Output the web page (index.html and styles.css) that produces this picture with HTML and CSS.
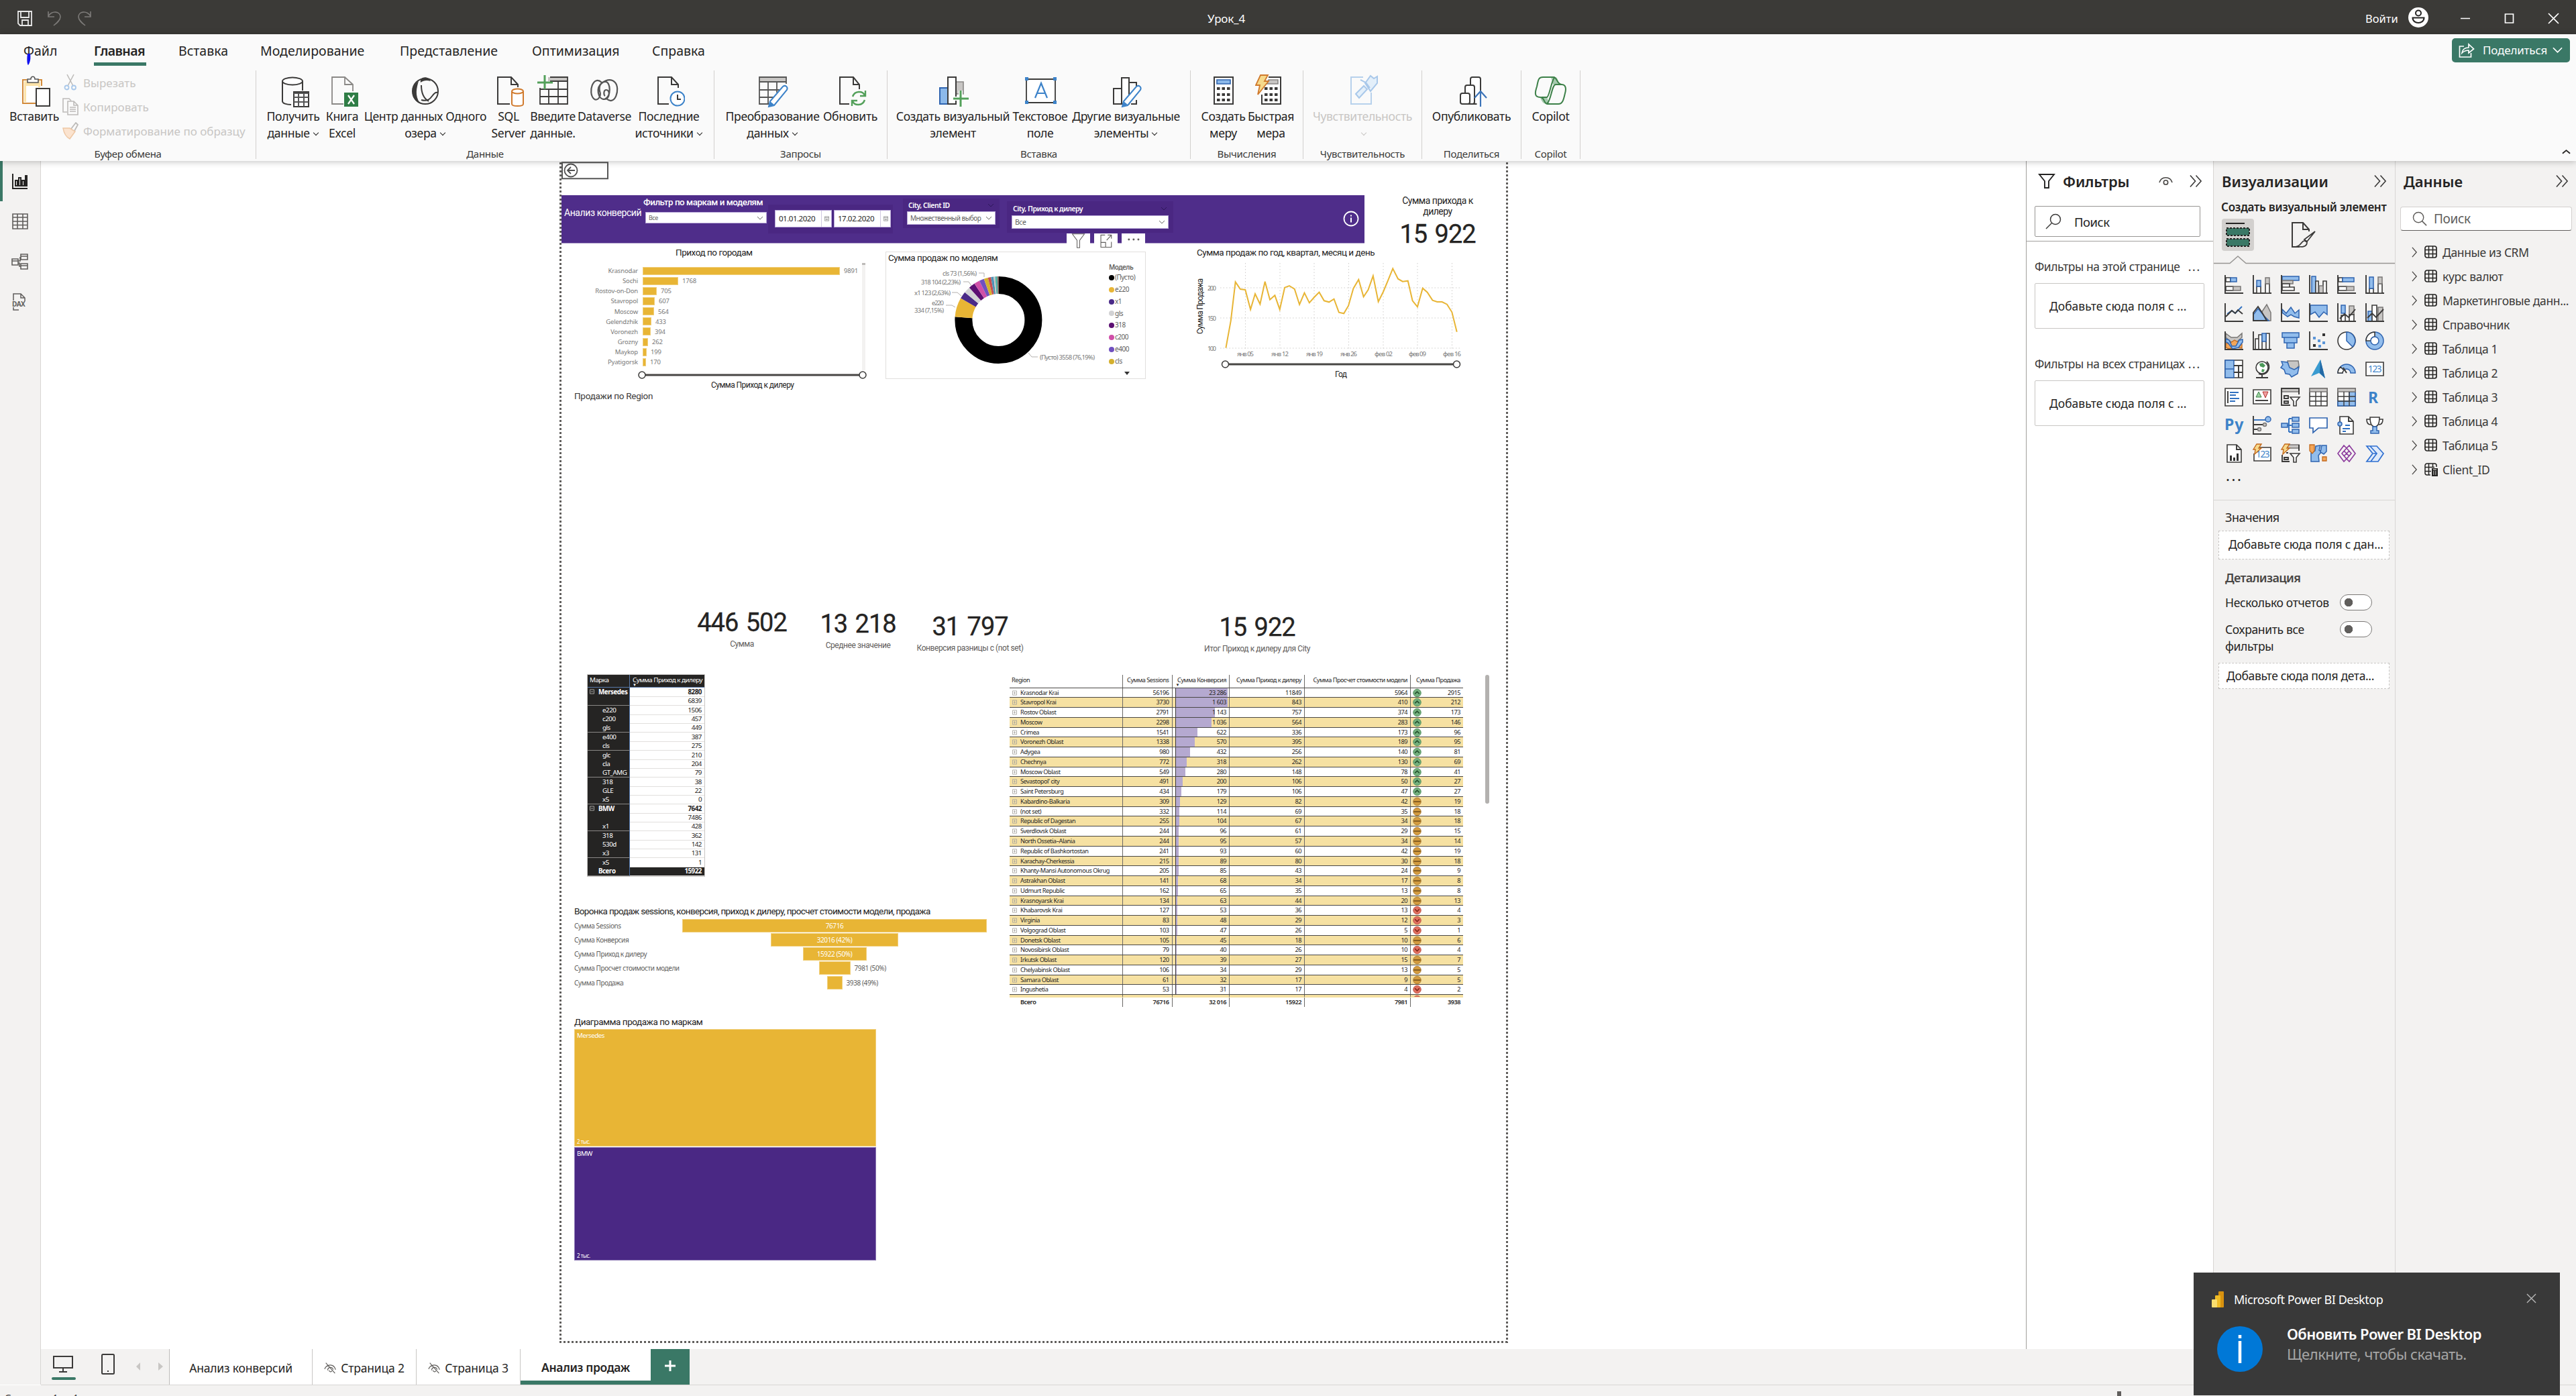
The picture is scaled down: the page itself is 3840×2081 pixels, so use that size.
FILE: index.html
```html
<!DOCTYPE html>
<html lang="ru">
<head>
<meta charset="utf-8">
<title>Урок_4</title>
<link rel="stylesheet" href="styles.css">
</head>
<body>
<svg class="defs" width="0" height="0">
  <symbol id="plus" viewBox="0 0 8 8"><path d="M.5 .5h7v7h-7zM2 4h4M4 2v4" fill="none" stroke="#a6a39f"/></symbol>
  <symbol id="minus" viewBox="0 0 8 8"><path d="M.5 .5h7v7h-7zM2 4h4" fill="none" stroke="#b8b6b4"/></symbol>
  <symbol id="up" viewBox="0 0 14 14"><circle cx="7" cy="7" r="6.2" fill="#73b07d" stroke="#4b8a58"/><path d="M3.5 8.5 7 5l3.5 3.5" fill="none" stroke="#24502e" stroke-width="1.6"/></symbol>
  <symbol id="mid" viewBox="0 0 14 14"><circle cx="7" cy="7" r="6.2" fill="#d39b3f" stroke="#a5752a"/><path d="M1.5 7h11" stroke="#6b4a17" stroke-width="1.6"/></symbol>
  <symbol id="down" viewBox="0 0 14 14"><circle cx="7" cy="7" r="6.2" fill="#e0705f" stroke="#b94a3c"/><path d="M3.5 5.2 7 8.8l3.5-3.6" fill="none" stroke="#7a1f16" stroke-width="1.6"/></symbol>
  <symbol id="chev" viewBox="0 0 10 8"><path d="M1 2l4 4 4-4" fill="none" stroke="currentColor"/></symbol>
  <symbol id="dbl" viewBox="0 0 20 20"><path d="M1 1l8 9-8 9M10 1l8 9-8 9" fill="none" stroke="#3b3a39" stroke-width="1.7"/></symbol>
  <symbol id="cal" viewBox="0 0 10 12"><path d="M.5 1.5h9v9h-9zM.5 4h9M3 6v3M5 6v3M7 6v3" fill="none" stroke="#777"/></symbol>
  <symbol id="tbl" viewBox="0 0 20 20"><rect x="1" y="1" width="17" height="17" rx="3" fill="none" stroke="#252423" stroke-width="1.7"/><path d="M1 6.5h17M1 12.5h17M6.5 1v17M12.5 1v17" stroke="#252423" stroke-width="1.5"/></symbol>
  <symbol id="gt" viewBox="0 0 10 18"><path d="M1 1l7 8-7 8" fill="none" stroke="#484644" stroke-width="1.4"/></symbol>
  <symbol id="hid" viewBox="0 0 22 22"><path d="M1 13C4 5 16 3 19 14M6 15c0-5 8-7 9-1M3 3l15 17M8 15c1 3 4 3 5 1" fill="none" stroke="#605e5c" stroke-width="1.3"/></symbol>
</svg>

<header class="titlebar">
  <svg class="quick" viewBox="0 0 140 30">
    <path d="M27 5h20v21H30l-3-3zM31 5v9h12V5M33 26v-8h9v8" fill="none" stroke="#e8e8e8" stroke-width="1.8"/>
    <path d="M72 5v8h9M72 12C78 3 90 5 90 13c0 5-5 9-10 13" fill="none" stroke="#7d7b79" stroke-width="1.6"/>
    <path d="M135 5v8h-9M135 12C129 3 117 5 117 13c0 5 5 9 10 13" fill="none" stroke="#7d7b79" stroke-width="1.6"/>
  </svg>
  <span class="doc">Урок_4</span>
  <div class="winctl">
    <span class="signin">Войти</span>
    <svg class="avatar" viewBox="0 0 30 30"><circle cx="15" cy="15" r="15" fill="#fff"/><circle cx="15" cy="8.5" r="4" fill="none" stroke="#252423" stroke-width="2"/><path d="M6.500 15.500h17c0 10-17 10-17 0z" fill="none" stroke="#252423" stroke-width="2"/></svg>
    <svg class="wc" viewBox="0 0 160 30"><path d="M2 15.500h14M68.500 9h12v13h-12zM133 8l15 15M148 8l-15 15" fill="none" stroke="#fff" stroke-width="1.7"/></svg>
  </div>
</header>

<section class="ribbon">
  <nav class="tabs">
    <span class="w1">Файл</span><span class="w2 on">Главная</span><span class="w3">Вставка</span><span class="w4">Моделирование</span><span class="w5">Представление</span><span class="w6">Оптимизация</span><span class="w7">Справка</span>
    <svg class="pen" viewBox="0 0 8 18"><path d="M2 0h4c1 7 0 13-3 17C1 16 1 6 2 0z" fill="#1010f0"/></svg>
    <button class="share"><svg viewBox="0 0 24 24"><path d="M8 6H1.500v16h17v-6M5 16c1-7 6-8 10-8V3l7.500 7L15 16v-4c-4 0-7 1-10 4z" fill="none" stroke="#fff" stroke-width="1.7"/></svg><span>Поделиться</span><svg class="sc" viewBox="0 0 16 10"><path d="M1 1l7 7 7-7" fill="none" stroke="#fff" stroke-width="1.8"/></svg></button>
  </nav>
  <div class="groups">
    <div class="grp g1">
      <div class="btns">
        <div class="btn b1"><svg viewBox="0 0 48 50"><path d="M13 8H7v35h20M29 8h6v9" fill="none" stroke="#d28a3a" stroke-width="2"/><path d="M9 10h24v9h-8v22H9z" fill="#fce3a9"/><path d="M12 17h18v24H12z" fill="#fff"/><path d="M14 12V7h5c0-5 6-5 6 0h5v5z" fill="#fff" stroke="#555" stroke-width="1.600"/><path d="M27 21h20v26H27z" fill="#fff" stroke="#3b3a39" stroke-width="2"/></svg><p>Вставить</p></div>
        <div class="minis">
          <p><svg viewBox="0 0 26 26"><path d="M8 1l9 17M18 1L9 18" fill="none" stroke="#bdbbb9" stroke-width="1.600"/><circle cx="7.500" cy="20.500" r="3" fill="none" stroke="#a9c8ea" stroke-width="1.800"/><circle cx="18" cy="20.500" r="3" fill="none" stroke="#a9c8ea" stroke-width="1.800"/></svg>Вырезать</p>
          <p><svg viewBox="0 0 26 26"><path d="M8 21H2V1h9l3 3M9 5h9l6 6v14H9zM18 5v6h6M12 14h9M12 17h9M12 20h9" fill="none" stroke="#bdbbb9" stroke-width="1.600"/></svg>Копировать</p>
          <p><svg viewBox="0 0 26 26"><path d="M14 10L21 1l3 3-5 9" fill="none" stroke="#bdbbb9" stroke-width="1.800"/><path d="M2 9l10 0 8 5-8 11C6 22 3 15 2 9z" fill="#fbe3cf" stroke="#eec7a4" stroke-width="1.500"/></svg>Форматирование по образцу</p>
        </div>
      </div><em>Буфер обмена</em>
    </div>
    <div class="grp g2">
      <div class="btns">
        <div class="btn b2"><svg viewBox="0 0 48 50"><path d="M8 10v30c0 3 6 5 13 5M38 10v14" fill="none" stroke="#3b3a39" stroke-width="2"/><ellipse cx="23" cy="10" rx="15" ry="5.500" fill="#fff" stroke="#3b3a39" stroke-width="2"/><path d="M25 26h22v22H25z" fill="#fff" stroke="#3b3a39" stroke-width="2"/><path d="M25 28h22M25 34h22M25 41h22M32 28v20M40 28v20" stroke="#555" stroke-width="2"/></svg><p>Получить<br>данные<i></i></p></div>
        <div class="btn b3"><svg viewBox="0 0 48 50"><path d="M26 44H9V4h19l12 11v10M28 4v11h12" fill="none" stroke="#8a8886" stroke-width="1.800"/><path d="M27 27h21v21H27z" fill="#2f7d46"/><path d="M33 31l9 13M42 31l-9 13" stroke="#fff" stroke-width="2.200"/></svg><p>Книга<br>Excel</p></div>
        <div class="btn b4"><svg viewBox="0 0 48 50"><circle cx="24" cy="25" r="19" fill="none" stroke="#3b3a39" stroke-width="2"/><path d="M17 12C15 3 28 1 32 10c-6-2-11-1-15 2zM14 10C1 18 2 38 16 43c-8-12-5-23-2-33z" fill="#3b3a39"/><path d="M18 16c0 12 4 20 11 24M43 27c-10-2-8 16-25 11" fill="none" stroke="#3b3a39" stroke-width="2"/></svg><p>Центр данных Одного<br>озера<i></i></p></div>
        <div class="btn b5"><svg viewBox="0 0 48 50"><path d="M26 44H8V4h20l10 11v4M28 4v11h10" fill="none" stroke="#3b3a39" stroke-width="2"/><path d="M29 25v19c0 4 17 4 17 0V25" fill="#fff" stroke="#d07a2d" stroke-width="2"/><ellipse cx="37.500" cy="25" rx="8.500" ry="3.500" fill="#fff" stroke="#d07a2d" stroke-width="2"/></svg><p>SQL<br>Server</p></div>
        <div class="btn b6"><svg viewBox="0 0 48 50"><path d="M17 4h29v6H17z" fill="#c8c6c4"/><path d="M20 4h26v40H5V20M20 10h26M5 22h41M5 33h41M18 22v22M32 10v34" fill="none" stroke="#3b3a39" stroke-width="1.800"/><path d="M12 1v21M1 12h23" stroke="#53a05a" stroke-width="3"/></svg><p>Введите<br>данные.</p></div>
        <div class="btn b7"><svg viewBox="0 0 48 50"><path d="M20 12C7 0-1 27 8 36c5 5 12-3 9-11-2-9 3-15 9-14 7 0 9 22-2 26M27 36c13 12 21-15 13-24-5-5-12-5-20 1-9 7-6 24 4 24 8 0 9-14 3-14-5 0-4 8-2 9" fill="none" stroke="#555" stroke-width="2.200"/></svg><p>Dataverse</p></div>
        <div class="btn b8"><svg viewBox="0 0 48 50"><path d="M24 44H8V4h20l10 11v5M28 4v11h10" fill="none" stroke="#3b3a39" stroke-width="2"/><circle cx="37" cy="36" r="10.500" fill="#fff" stroke="#3d83c9" stroke-width="2"/><path d="M37 30v7h5" fill="none" stroke="#3b3a39" stroke-width="2"/></svg><p>Последние<br>источники<i></i></p></div>
      </div><em>Данные</em>
    </div>
    <div class="grp g3">
      <div class="btns">
        <div class="btn b9"><svg viewBox="0 0 48 50"><path d="M4 5h40v5H4z" fill="#c8c6c4"/><path d="M20 44H4V4h40v10M4 11h40M4 23h30M4 34h22M17 11v33M30 11v16" fill="none" stroke="#555" stroke-width="1.800"/><path d="M20 40l19-22c4-3 8 1 6 5L26 46l-8 2z" fill="#fff" stroke="#3d83c9" stroke-width="2"/><path d="M20 40l6 5-8 3z" fill="#3d83c9"/></svg><p>Преобразование<br>данных<i></i></p></div>
        <div class="btn b10"><svg viewBox="0 0 48 50"><path d="M22 44H8V4h20l9 11v7M28 4v11h9" fill="none" stroke="#3b3a39" stroke-width="2"/><path d="M27 33c3-9 15-9 18-2M46 24v8h-8M45 38c-3 9-15 9-18 2M26 47v-8h8" fill="none" stroke="#53a05a" stroke-width="2.400"/></svg><p>Обновить</p></div>
      </div><em>Запросы</em>
    </div>
    <div class="grp g4">
      <div class="btns">
        <div class="btn b11"><svg viewBox="0 0 48 50"><path d="M4 20h12v24H4z" fill="#8cb9ea" stroke="#2f64b0" stroke-width="2"/><path d="M28 11h11v18h-11z" fill="#c8c6c4" stroke="#8a8886" stroke-width="1.600"/><path d="M16 4h12v40H16z" fill="#fff" stroke="#3b3a39" stroke-width="2"/><path d="M35 24v24M24 36h23" stroke="#fff" stroke-width="6"/><path d="M35 24v24M24 36h23" stroke="#53a05a" stroke-width="3"/></svg><p>Создать визуальный<br>элемент</p></div>
        <div class="btn b12"><svg viewBox="0 0 48 50"><path d="M3 7h43v35H3z" fill="#fff" stroke="#3b3a39" stroke-width="1.800"/><path d="M1 4h5v5H1zM43 4h5v5h-5zM1 39h5v5H1zM43 39h5v5h-5z" fill="#3d83c9"/><path d="M16 35l9-22 9 22M19 28h12" fill="none" stroke="#3d83c9" stroke-width="2.200"/></svg><p>Текстовое<br>поле</p></div>
        <div class="btn b13"><svg viewBox="0 0 48 50"><path d="M5 21h12v23H5zM28 12h11v7M39 38v6h-8" fill="none" stroke="#3b3a39" stroke-width="2"/><path d="M17 5h11v39H17z" fill="#fff" stroke="#3b3a39" stroke-width="2"/><path d="M20 40l19-22c4-3 8 1 6 5L26 46l-8 2z" fill="#fff" stroke="#3d83c9" stroke-width="2"/><path d="M20 40l6 5-8 3z" fill="#3d83c9"/></svg><p>Другие визуальные<br>элементы<i></i></p></div>
      </div><em>Вставка</em>
    </div>
    <div class="grp g5">
      <div class="btns">
        <div class="btn b14"><svg viewBox="0 0 48 50"><path d="M10 4h28v40H10z" fill="#fff" stroke="#3b3a39" stroke-width="2"/><path d="M14 8h20v6H14z" fill="#8cb9ea" stroke="#2f64b0" stroke-width="1.600"/><path d="M14 21h20M14 30h20M14 38h20" stroke="#3b3a39" stroke-width="4" stroke-dasharray="4.500 3"/></svg><p>Создать<br>меру</p></div>
        <div class="btn b15"><svg viewBox="0 0 48 50"><path d="M20 4h18v40H10V30" fill="#fff" stroke="#3b3a39" stroke-width="2"/><path d="M20 8h14v6H18z" fill="#c8c6c4" stroke="#8a8886" stroke-width="1.600"/><path d="M14 21h20M14 30h20M14 38h20" stroke="#3b3a39" stroke-width="4" stroke-dasharray="4.500 3"/><path d="M8 1h11l-5 9h6L4 30l3-14H1z" fill="#f6d98b" stroke="#d07a2d" stroke-width="1.800"/></svg><p>Быстрая<br>мера</p></div>
      </div><em>Вычисления</em>
    </div>
    <div class="grp g6">
      <div class="btns"><div class="btn off"><svg viewBox="0 0 48 50"><path d="M25 4H7v40h30V27" fill="none" stroke="#b7d1ec" stroke-width="2"/><path d="M14 29l12-12 5 5-12 13zM21 8l8 4 6 8M28 13l8-11 5 4 5-3v10L36 25z" fill="#e3effa" stroke="#a9c8ea" stroke-width="2"/></svg><p>Чувствительность<br><i></i></p></div></div><em>Чувствительность</em>
    </div>
    <div class="grp g7">
      <div class="btns"><div class="btn"><svg viewBox="0 0 48 50"><rect x="22" y="4" width="15" height="40" rx="3" fill="#fff" stroke="#3b3a39" stroke-width="2"/><rect x="14" y="16" width="14" height="28" rx="3" fill="#fff" stroke="#3b3a39" stroke-width="2"/><rect x="7" y="28" width="14" height="16" rx="3" fill="#fff" stroke="#3b3a39" stroke-width="2"/><path d="M36 26v22" stroke="#fff" stroke-width="9"/><path d="M37 48V26M28 35l9-10 9 10" fill="none" stroke="#3d74b8" stroke-width="2.200"/></svg><p>Опубликовать</p></div></div><em>Поделиться</em>
    </div>
    <div class="grp g8">
      <div class="btns"><div class="btn"><svg viewBox="0 0 48 50"><path d="M25 4h6c4 0 4 4 6 11h-9zM9 34h10l4 10c-9 0-11-1-14-10z" fill="#a6c9ae"/><path d="M13 4h16c5 0 5 11 12 11 6 0 7 6 5 13-2 8-3 16-10 16H20c-6 0-4-10-11-10-9 0-8-7-5-16C6 9 6 4 13 4zM31 4c-5 2-8 29-12 30h-8M19 43c6-2 7-28 13-28h10" fill="none" stroke="#3c8048" stroke-width="2"/></svg><p>Copilot</p></div></div><em>Copilot</em>
    </div>
    <svg class="collapse" viewBox="0 0 14 8"><path d="M1 7l6-5 6 5" fill="none" stroke="#252423" stroke-width="2"/></svg>
  </div>
</section>

<main class="work">
  <aside class="rail">
    <b></b>
    <svg viewBox="0 0 26 26"><path d="M2 2v22h22M6 12h3v8H6zM11 8h3v12h-3zM16 12h3v8h-3zM21 5h2v15h-2z" fill="none" stroke="#252423" stroke-width="2"/></svg>
    <svg viewBox="0 0 26 26"><path d="M2 2h22v22H2zM2 7h22M2 13h22M2 18.500h22M9 2v22M17 2v22" fill="none" stroke="#605e5c" stroke-width="1.600"/></svg>
    <svg viewBox="0 0 26 26"><path d="M1 9h9v9H1zM14 2h10v8H14zM14 16h10v8H14zM10 12h3V6M10 15h2v5h2M14 5h10M14 19h10M1 12h9" fill="none" stroke="#605e5c" stroke-width="1.600"/></svg>
    <svg viewBox="0 0 26 26"><path d="M3 11V1h11l6 6v5M14 1v6h6M3 21v4h8" fill="none" stroke="#605e5c" stroke-width="1.500"/><text x="1" y="20" class="daxt">DAX</text></svg>
  </aside>

  <section class="stage">
    <div class="page">
      <svg class="back" viewBox="0 0 70 27"><path d="M1 1.200h68v24H1z" fill="#fff" stroke="#575757" stroke-width="2"/><circle cx="14" cy="13" r="9.500" fill="none" stroke="#505050" stroke-width="1.800"/><path d="M20 13H9M14 8l-5 5 5 5" fill="none" stroke="#505050" stroke-width="1.800"/></svg>

      <div class="banner"></div>
      <div class="v btitle">Анализ конверсий</div>
      <div class="v sl1"><h4>Фильтр по маркам и моделям</h4><div class="dd">Все<svg><use href="#chev"/></svg></div></div>
      <div class="v dates"><div>01.01.2020<svg><use href="#cal"/></svg></div><div>17.02.2020<svg><use href="#cal"/></svg></div></div>
      <div class="v sl2"><h5>City, Client ID<svg><use href="#chev"/></svg></h5><div class="dd">Множественный выбор<svg><use href="#chev"/></svg></div></div>
      <div class="v sl3"><h5>City, Приход к дилеру<svg><use href="#chev"/></svg></h5><div class="dd">Все<svg><use href="#chev"/></svg></div></div>
      <svg class="v info" viewBox="0 0 24 24"><circle cx="12" cy="12" r="10.500" fill="none" stroke="#fff" stroke-width="1.800"/><path d="M12 10.500v7M12 6.500v2" stroke="#fff" stroke-width="2"/></svg>

      <div class="v kpi k0"><span>Сумма прихода к<br>дилеру</span><b>15 922</b></div>

      <h3 class="v h-city">Приход по городам</h3>
      <div class="v bars">
        <div><span>Krasnodar</span><i style="width:294px"></i>9891</div>
        <div><span>Sochi</span><i style="width:53px"></i>1768</div>
        <div><span>Rostov-on-Don</span><i style="width:21px"></i>705</div>
        <div><span>Stavropol</span><i style="width:18px"></i>607</div>
        <div><span>Moscow</span><i style="width:17px"></i>564</div>
        <div><span>Gelendzhik</span><i style="width:13px"></i>433</div>
        <div><span>Voronezh</span><i style="width:12px"></i>394</div>
        <div><span>Grozny</span><i style="width:8px"></i>262</div>
        <div><span>Maykop</span><i style="width:6px"></i>199</div>
        <div><span>Pyatigorsk</span><i style="width:5px"></i>170</div>
      </div>
      <div class="v vscroll"></div>
      <svg class="v zoom1" viewBox="0 0 342 14"><path d="M10 7h322" stroke="#484644" stroke-width="3"/><circle cx="6" cy="7" r="5" fill="#fff" stroke="#3b3a39" stroke-width="1.500"/><circle cx="335" cy="7" r="5" fill="#fff" stroke="#3b3a39" stroke-width="1.500"/></svg>
      <p class="v ax1">Сумма Приход к дилеру</p>
      <h3 class="v h-reg">Продажи по Region</h3>

      <div class="v donut">
        <h3>Сумма продаж по моделям</h3>
        <svg viewBox="1320 375 388 190">
          <g class="ring" fill="none" stroke-width="26">
            <circle cx="1488.400" cy="477" r="52" pathLength="360" stroke="#000" stroke-dasharray="274.300 360"/>
            <circle cx="1488.400" cy="477" r="52" pathLength="360" stroke="#e8b535" stroke-dasharray="25.700 360" stroke-dashoffset="-274.300"/>
            <circle cx="1488.400" cy="477" r="52" pathLength="360" stroke="#4a2a88" stroke-dasharray="9.500 360" stroke-dashoffset="-300"/>
            <circle cx="1488.400" cy="477" r="52" pathLength="360" stroke="#d2d2d4" stroke-dasharray="8.500 360" stroke-dashoffset="-309.500"/>
            <circle cx="1488.400" cy="477" r="52" pathLength="360" stroke="#5c0f72" stroke-dasharray="8.500 360" stroke-dashoffset="-318"/>
            <circle cx="1488.400" cy="477" r="52" pathLength="360" stroke="#d04fa8" stroke-dasharray="7.500 360" stroke-dashoffset="-326.500"/>
            <circle cx="1488.400" cy="477" r="52" pathLength="360" stroke="#7050c0" stroke-dasharray="6.500 360" stroke-dashoffset="-334"/>
            <circle cx="1488.400" cy="477" r="52" pathLength="360" stroke="#d4b02e" stroke-dasharray="5.500 360" stroke-dashoffset="-340.500"/>
            <circle cx="1488.400" cy="477" r="52" pathLength="360" stroke="#c85050" stroke-dasharray="4 360" stroke-dashoffset="-346"/>
            <circle cx="1488.400" cy="477" r="52" pathLength="360" stroke="#4f93b8" stroke-dasharray="3.500 360" stroke-dashoffset="-350"/>
            <circle cx="1488.400" cy="477" r="52" pathLength="360" stroke="#cfc3c0" stroke-dasharray="2 360" stroke-dashoffset="-353.500"/>
            <circle cx="1488.400" cy="477" r="52" pathLength="360" stroke="#4fb3a6" stroke-dasharray="3 360" stroke-dashoffset="-355.500"/>
            <circle cx="1488.400" cy="477" r="52" pathLength="360" stroke="#9a6a62" stroke-dasharray="1.500 360" stroke-dashoffset="-358.500"/>
          </g>
          <path d="M1459 407h8v6M1436 420h8l4 6M1419 436h8l6 5M1410 455h9l5 3M1533 526l5 6h9" fill="none" stroke="#b3b0ad"/>
          <g class="lbl">
            <text x="1405" y="410.500" textLength="51">cls 73 (1,56%)</text><text x="1373" y="424" textLength="59">318 104 (2,23%)</text>
            <text x="1363" y="439.500" textLength="54">x1 123 (2,63%)</text><text x="1389" y="455" textLength="18">e220</text>
            <text x="1363" y="466" textLength="44">334 (7,15%)</text><text x="1550" y="536" textLength="82">(Пусто) 3558 (76,19%)</text>
          </g>
          <path d="M1676 554h8l-4 5z" fill="#333"/>
        </svg>
        <ul class="legend"><li class="lt">Модель</li><li class="c1">(Пусто)</li><li class="c2">e220</li><li class="c3">x1</li><li class="c4">gls</li><li class="c5">318</li><li class="c6">c200</li><li class="c7">e400</li><li class="c8">cls</li></ul>
      </div>
      <div class="v vhead">
        <svg viewBox="0 0 35 28"><path d="M6 1h23l-9 12v14h-5V13z" fill="none" stroke="#605e5c" stroke-width="1.300"/></svg>
        <svg viewBox="0 0 35 28"><path d="M16 3H8v23h20V16M21 3h7v7M28 3l-9 10M8 17h9v9" fill="none" stroke="#605e5c" stroke-width="1.400"/></svg>
        <svg viewBox="0 0 35 28"><circle cx="9" cy="11.500" r="1.900"/><circle cx="18" cy="11.500" r="1.900"/><circle cx="27" cy="11.500" r="1.900"/></svg>
      </div>

      <h3 class="v h-line">Сумма продаж по год, квартал, месяц и день</h3>
      <svg class="v line" viewBox="1780 388 400 182">
        <path d="M1856.500 392v128M1908 392v128M1959 392v128M2010.500 392v128M2062 392v128M2113 392v128M2164.500 392v128M1819 429h358M1819 474h358M1819 519h358" fill="none" stroke="#cfcdcb" stroke-dasharray="1.500 3"/>
        <polyline transform="translate(1540 240) scale(.4591 .33333)" vector-effect="non-scaling-stroke" fill="none" stroke="#e8b535" stroke-width="2" points="626,836 642,715 657,541 673,573 689,576 706,664 721,594 737,640 753,539 769,620 785,601 801,664 817,566 832,558 849,573 865,642 881,590 897,634 913,609 929,587 945,625 961,631 977,617 993,677 1009,682 1024,647 1040,570 1057,530 1073,607 1088,576 1104,514 1121,629 1137,585 1153,532 1168,481 1185,527 1200,539 1217,536 1232,625 1248,652 1265,569 1280,587 1297,623 1312,630 1328,630 1344,641 1360,676 1376,764"/>
        <g class="lbl"><text x="1800" y="432.500" textLength="13">200</text><text x="1800" y="477.500" textLength="13">150</text><text x="1800" y="522.500" textLength="13">100</text>
        <text x="1844" y="530.500" textLength="25">янв 05</text><text x="1895" y="530.500" textLength="26">янв 12</text><text x="1947" y="530.500" textLength="25">янв 19</text><text x="1998" y="530.500" textLength="25">янв 26</text><text x="2049" y="530.500" textLength="27">фев 02</text><text x="2100" y="530.500" textLength="26">фев 09</text><text x="2151" y="530.500" textLength="27">фев 16</text></g>
        <text class="axis" transform="translate(1793 498) rotate(-90)" textLength="83">Сумма Продажа</text>
        <path d="M1831 543h336" stroke="#484644" stroke-width="3"/><circle cx="1826.500" cy="543" r="5" fill="#fff" stroke="#3b3a39" stroke-width="1.500"/><circle cx="2171.500" cy="543" r="5" fill="#fff" stroke="#3b3a39" stroke-width="1.500"/>
        <text class="axis" x="1990" y="562" textLength="18">Год</text>
      </svg>

      <div class="v kpi k1"><b>446 502</b><span>Сумма</span></div>
      <div class="v kpi k2"><b>13 218</b><span>Среднее значение</span></div>
      <div class="v kpi k3"><b>31 797</b><span>Конверсия разницы с (not set)</span></div>
      <div class="v kpi k4"><b>15 922</b><span>Итог Приход к дилеру для City</span></div>

      <div class="v matrix">
        <div class="mh"><span>Марка</span><span>Сумма Приход к дилеру</span></div>
        <div class="bd"><span><svg><use href="#minus"/></svg>Mersedes</span><span>8280</span></div>
        <div><span></span><span>6839</span></div>
        <div><span>e220</span><span>1506</span></div>
        <div><span>c200</span><span>457</span></div>
        <div><span>gls</span><span>449</span></div>
        <div><span>e400</span><span>387</span></div>
        <div><span>cls</span><span>275</span></div>
        <div><span>glc</span><span>210</span></div>
        <div><span>cla</span><span>204</span></div>
        <div><span>GT_AMG</span><span>79</span></div>
        <div><span>318</span><span>38</span></div>
        <div><span>GLE</span><span>22</span></div>
        <div><span>x5</span><span>0</span></div>
        <div class="bd"><span><svg><use href="#minus"/></svg>BMW</span><span>7642</span></div>
        <div><span></span><span>7486</span></div>
        <div><span>x1</span><span>428</span></div>
        <div><span>318</span><span>362</span></div>
        <div><span>530d</span><span>142</span></div>
        <div><span>x3</span><span>131</span></div>
        <div><span>x5</span><span>1</span></div>
        <div class="bd tot"><span>Всего</span><span>15922</span></div>
      </div>

      <h3 class="v h-fun">Воронка продаж sessions, конверсия, приход к дилеру, просчет стоимости модели, продажа</h3>
      <div class="v funnel">
        <div><span>Сумма Sessions</span><p><i style="width:454px">76716</i></p></div>
        <div><span>Сумма Конверсия</span><p><i style="width:190px">32016 (42%)</i></p></div>
        <div><span>Сумма Приход к дилеру</span><p><i style="width:95px">15922 (50%)</i></p></div>
        <div><span>Сумма Просчет стоимости модели</span><p><i style="width:47px"><u>7981 (50%)</u></i></p></div>
        <div><span>Сумма Продажа</span><p><i style="width:23px"><u>3938 (49%)</u></i></p></div>
      </div>

      <h3 class="v h-tree">Диаграмма продажа по маркам</h3>
      <div class="v tree"><div class="t1"><span>Mersedes</span><span>2 тыс.</span></div><div class="t2"><span>BMW</span><span>2 тыс.</span></div></div>

      <div class="v grid">
        <div class="r gh"><span>Region</span><span>Сумма Sessions</span><span>Сумма Конверсия</span><span>Сумма Приход к дилеру</span><span>Сумма Просчет стоимости модели</span><span>Сумма Продажа</span></div>
        <div class="rows">
        <div class="r"><span><svg><use href="#plus"/></svg>Krasnodar Krai</span><span>56196</span><span><i style="width:78px"></i>23 286</span><span>11849</span><span>5964</span><span><svg><use href="#up"/></svg>2915</span></div>
        <div class="r"><span><svg><use href="#plus"/></svg>Stavropol Krai</span><span>3730</span><span><i style="width:78px"></i>1 603</span><span>843</span><span>410</span><span><svg><use href="#up"/></svg>212</span></div>
        <div class="r"><span><svg><use href="#plus"/></svg>Rostov Oblast</span><span>2791</span><span><i style="width:59px"></i>1 143</span><span>757</span><span>374</span><span><svg><use href="#up"/></svg>173</span></div>
        <div class="r"><span><svg><use href="#plus"/></svg>Moscow</span><span>2298</span><span><i style="width:54px"></i>1 036</span><span>564</span><span>283</span><span><svg><use href="#up"/></svg>146</span></div>
        <div class="r"><span><svg><use href="#plus"/></svg>Crimea</span><span>1541</span><span><i style="width:33px"></i>622</span><span>336</span><span>173</span><span><svg><use href="#up"/></svg>96</span></div>
        <div class="r"><span><svg><use href="#plus"/></svg>Voronezh Oblast</span><span>1338</span><span><i style="width:29px"></i>570</span><span>395</span><span>189</span><span><svg><use href="#up"/></svg>95</span></div>
        <div class="r"><span><svg><use href="#plus"/></svg>Adygea</span><span>980</span><span><i style="width:22px"></i>432</span><span>256</span><span>140</span><span><svg><use href="#up"/></svg>81</span></div>
        <div class="r"><span><svg><use href="#plus"/></svg>Chechnya</span><span>772</span><span><i style="width:17px"></i>318</span><span>262</span><span>130</span><span><svg><use href="#up"/></svg>69</span></div>
        <div class="r"><span><svg><use href="#plus"/></svg>Moscow Oblast</span><span>549</span><span><i style="width:15px"></i>280</span><span>148</span><span>78</span><span><svg><use href="#up"/></svg>41</span></div>
        <div class="r"><span><svg><use href="#plus"/></svg>Sevastopol' city</span><span>491</span><span><i style="width:11px"></i>200</span><span>106</span><span>50</span><span><svg><use href="#up"/></svg>27</span></div>
        <div class="r"><span><svg><use href="#plus"/></svg>Saint Petersburg</span><span>434</span><span><i style="width:9px"></i>179</span><span>106</span><span>47</span><span><svg><use href="#up"/></svg>27</span></div>
        <div class="r"><span><svg><use href="#plus"/></svg>Kabardino-Balkaria</span><span>309</span><span><i style="width:7px"></i>129</span><span>82</span><span>42</span><span><svg><use href="#mid"/></svg>19</span></div>
        <div class="r"><span><svg><use href="#plus"/></svg>(not set)</span><span>332</span><span><i style="width:6px"></i>114</span><span>69</span><span>35</span><span><svg><use href="#mid"/></svg>18</span></div>
        <div class="r"><span><svg><use href="#plus"/></svg>Republic of Dagestan</span><span>255</span><span><i style="width:6px"></i>104</span><span>67</span><span>34</span><span><svg><use href="#mid"/></svg>18</span></div>
        <div class="r"><span><svg><use href="#plus"/></svg>Sverdlovsk Oblast</span><span>244</span><span><i style="width:5px"></i>96</span><span>61</span><span>29</span><span><svg><use href="#mid"/></svg>15</span></div>
        <div class="r"><span><svg><use href="#plus"/></svg>North Ossetia–Alania</span><span>244</span><span><i style="width:5px"></i>95</span><span>57</span><span>34</span><span><svg><use href="#mid"/></svg>14</span></div>
        <div class="r"><span><svg><use href="#plus"/></svg>Republic of Bashkortostan</span><span>241</span><span><i style="width:5px"></i>93</span><span>60</span><span>42</span><span><svg><use href="#mid"/></svg>19</span></div>
        <div class="r"><span><svg><use href="#plus"/></svg>Karachay-Cherkessia</span><span>215</span><span><i style="width:5px"></i>89</span><span>80</span><span>30</span><span><svg><use href="#mid"/></svg>18</span></div>
        <div class="r"><span><svg><use href="#plus"/></svg>Khanty-Mansi Autonomous Okrug</span><span>205</span><span><i style="width:5px"></i>85</span><span>43</span><span>24</span><span><svg><use href="#mid"/></svg>9</span></div>
        <div class="r"><span><svg><use href="#plus"/></svg>Astrakhan Oblast</span><span>141</span><span><i style="width:4px"></i>68</span><span>34</span><span>17</span><span><svg><use href="#mid"/></svg>8</span></div>
        <div class="r"><span><svg><use href="#plus"/></svg>Udmurt Republic</span><span>162</span><span><i style="width:4px"></i>65</span><span>35</span><span>13</span><span><svg><use href="#mid"/></svg>8</span></div>
        <div class="r"><span><svg><use href="#plus"/></svg>Krasnoyarsk Krai</span><span>134</span><span><i style="width:3px"></i>63</span><span>44</span><span>20</span><span><svg><use href="#mid"/></svg>13</span></div>
        <div class="r"><span><svg><use href="#plus"/></svg>Khabarovsk Krai</span><span>127</span><span><i style="width:3px"></i>53</span><span>36</span><span>13</span><span><svg><use href="#down"/></svg>4</span></div>
        <div class="r"><span><svg><use href="#plus"/></svg>Virginia</span><span>83</span><span><i style="width:3px"></i>48</span><span>29</span><span>12</span><span><svg><use href="#down"/></svg>3</span></div>
        <div class="r"><span><svg><use href="#plus"/></svg>Volgograd Oblast</span><span>103</span><span><i style="width:3px"></i>47</span><span>26</span><span>5</span><span><svg><use href="#down"/></svg>1</span></div>
        <div class="r"><span><svg><use href="#plus"/></svg>Donetsk Oblast</span><span>105</span><span><i style="width:2px"></i>45</span><span>18</span><span>10</span><span><svg><use href="#mid"/></svg>6</span></div>
        <div class="r"><span><svg><use href="#plus"/></svg>Novosibirsk Oblast</span><span>79</span><span><i style="width:2px"></i>40</span><span>26</span><span>10</span><span><svg><use href="#down"/></svg>4</span></div>
        <div class="r"><span><svg><use href="#plus"/></svg>Irkutsk Oblast</span><span>120</span><span><i style="width:2px"></i>39</span><span>27</span><span>15</span><span><svg><use href="#mid"/></svg>7</span></div>
        <div class="r"><span><svg><use href="#plus"/></svg>Chelyabinsk Oblast</span><span>106</span><span><i style="width:2px"></i>34</span><span>29</span><span>13</span><span><svg><use href="#mid"/></svg>5</span></div>
        <div class="r"><span><svg><use href="#plus"/></svg>Samara Oblast</span><span>61</span><span><i style="width:2px"></i>32</span><span>17</span><span>9</span><span><svg><use href="#mid"/></svg>5</span></div>
        <div class="r"><span><svg><use href="#plus"/></svg>Ingushetia</span><span>53</span><span><i style="width:2px"></i>31</span><span>17</span><span>4</span><span><svg><use href="#down"/></svg>2</span></div>
        <div class="r"><span></span><span></span><span></span><span></span><span></span><span><svg><use href="#down"/></svg></span></div>
        </div>
        <div class="r gtot"><span>Всего</span><span>76716</span><span>32 016</span><span>15922</span><span>7981</span><span>3938</span></div>
      </div>
      <div class="v gscroll"></div>
    </div>
  </section>

  <aside class="filters">
    <header><svg viewBox="0 0 26 24"><path d="M2 2h22l-8 10v10h-6V12z" fill="none" stroke="#252423" stroke-width="1.900"/></svg><h2>Фильтры</h2><svg class="eye" viewBox="0 0 22 18"><path d="M1 11C4 1 18 1 21 11" fill="none" stroke="#484644" stroke-width="1.700"/><circle cx="11" cy="11" r="3.300" fill="none" stroke="#484644" stroke-width="1.700"/></svg><svg class="dbl"><use href="#dbl"/></svg></header>
    <div class="fsearch"><svg viewBox="0 0 24 24"><circle cx="15" cy="9" r="7.500" fill="none" stroke="#3b3a39" stroke-width="1.500"/><path d="M9.500 14.500L1 23" stroke="#3b3a39" stroke-width="1.500"/></svg>Поиск</div>
    <hr>
    <p>Фильтры на этой странице<span>...</span></p><div class="drop">Добавьте сюда поля с ...</div>
    <p class="p2">Фильтры на всех страницах<span>...</span></p><div class="drop">Добавьте сюда поля с ...</div>
  </aside>

  <aside class="viz">
    <header><h2>Визуализации</h2><svg class="dbl"><use href="#dbl"/></svg></header>
    <h6>Создать визуальный элемент</h6>
    <div class="modes">
      <svg class="sel" viewBox="0 0 48 48"><path d="M6 7h28" stroke="#252423" stroke-width="2"/><path d="M7 14h34v11H7zM7 30h34v11H7z" fill="#3a7866" stroke="#252423" stroke-width="2" stroke-dasharray="3 2"/></svg>
      <svg viewBox="0 0 40 44"><path d="M14 40H3V4h16l9 10v3M19 4v10h9" fill="none" stroke="#3b3a39" stroke-width="2"/><path d="M37 17L25 32l-4-3z" fill="#fff" stroke="#3b3a39" stroke-width="1.800"/><path d="M22 31c-5-1-5 6-11 8 6 2 14 1 14-6z" fill="#f3f2f1" stroke="#3b3a39" stroke-width="1.800"/></svg>
    </div>
    <svg class="caret" viewBox="0 0 270 13"><path d="M0 11.500h24L36 1l12 10.500h222" fill="none" stroke="#979593" stroke-width="1.500"/></svg>
    <div class="icons">
      <svg viewBox="0 0 28 28"><path class="k" d="M1 0v27h27"/><path class="w" d="M2 4h7v6H2zM2 17h11v6H2z"/><path class="b" d="M9 4h9v6H9z"/><path class="g" d="M13 17h11v6H13z"/></svg>
      <svg viewBox="0 0 28 28"><path class="k" d="M1 0v27h27"/><path class="w" d="M6 17h6v10H6zM19 13h6v14h-6z"/><path class="b" d="M6 8h6v9H6z"/><path class="g" d="M19 4h6v9h-6z"/></svg>
      <svg viewBox="0 0 28 28"><path class="b" d="M2 2h25v6H2z"/><path class="g" d="M2 8h16v5H2z"/><path class="w" d="M2 13h11v5H2zM2 18h18v5H2z"/><path class="k" d="M1 0v27h27"/></svg>
      <svg viewBox="0 0 28 28"><path class="b" d="M4 2h6v25H4z"/><path class="w" d="M10 9h4v18h-4zM21 9h5v18h-5z"/><path class="g" d="M15 16h6v11h-6z"/><path class="k" d="M1 0v27h27"/></svg>
      <svg viewBox="0 0 28 28"><path class="k" d="M1 0v27h27"/><path class="w" d="M2 4h6v6H2zM2 17h12v6H2z"/><path class="b" d="M8 4h17v6H8z"/><path class="g" d="M14 17h11v6H14z"/></svg>
      <svg viewBox="0 0 28 28"><path class="k" d="M1 0v27h27"/><path class="w" d="M6 20h6v7H6zM19 13h6v14h-6z"/><path class="b" d="M6 3h6v17H6z"/><path class="g" d="M19 3h6v10h-6z"/></svg>
      <svg viewBox="0 0 28 28"><path class="bl" d="M4 16l7-5 5 4 10-10"/><path class="k" d="M1 0v27h27M2 20l9-9 5 4 4-5 7 6"/></svg>
      <svg viewBox="0 0 28 28"><path class="g" d="M13 14l8-12 6 12v12H13z"/><path class="b" d="M1 26V17l7-9 5 6 5 6 6 6z"/><path class="k" d="M1 17v-3l7-9 6 9 7 12H1z"/></svg>
      <svg viewBox="0 0 28 28"><path class="b" d="M2 9l6 6 7-9 6 9 6-5v12l-7-2-5-3-5 3-8-6z"/><path class="k" d="M1 0v27h27"/></svg>
      <svg viewBox="0 0 28 28"><path class="b" d="M2 3h25v14l-5-4-7 8-6-8-7 4z"/><path class="k" d="M1 0v27h27"/></svg>
      <svg viewBox="0 0 28 28"><path class="b" d="M6 3h6v12H6z"/><path class="g" d="M18 4h7v13h-7z"/><path class="w" d="M6 18h6v9H6zM18 17h7v10h-7z"/><path class="k" d="M1 0v27h27M4 23l7-7 6 5L27 9"/></svg>
      <svg viewBox="0 0 28 28"><path class="b" d="M4 12h6v15H4z"/><path class="w" d="M10 3h7v24h-7z"/><path class="g" d="M19 6h7v21h-7z"/><path class="k" d="M1 0v27h27M3 22l7-7 6 6L27 9"/></svg>
      <svg viewBox="0 0 28 28"><path class="g" d="M2 3l8 6h9l7-6v6l-8 7h-8L2 9z"/><path class="o" d="M2 24v-6h5l8-5 11 6v6l-10-1-9 2z"/><path class="b" d="M2 11l5 2 4 9h6l5-9 5-1v4l-6 8-9 2-7-9-3-1z"/><path class="k" d="M1 0v27h27"/></svg>
      <svg viewBox="0 0 28 28"><path class="w" d="M4 11h5v16H4zM9 5h5v22H9zM20 3h5v24h-5z"/><path class="b" d="M14 3h6v12h-6z"/><path class="k" d="M1 0v27h27"/></svg>
      <svg viewBox="0 0 28 28"><path class="b" d="M2 2h25v7H2zM5 9h19v8H5zM9 17h11v8H9z"/></svg>
      <svg viewBox="0 0 28 28"><path class="k" d="M1 0v27h27"/><path d="M6 8h4v4H6zM13 12h4v4h-4zM14 20h4v4h-4zM20 15h4v4h-4z" fill="#5b96d8"/><path d="M20 3h4v4h-4zM6 19h4v4H6z" fill="#333"/></svg>
      <svg viewBox="0 0 28 28"><circle class="w" cx="14" cy="14" r="13"/><path class="b" d="M14 14V1a13 13 0 0 1 9 22z"/></svg>
      <svg viewBox="0 0 28 28"><circle class="b" cx="14" cy="14" r="13"/><path class="w" d="M14 1v7a6 6 0 0 0-6 6H1A13 13 0 0 1 14 1z"/><circle cx="14" cy="14" r="6" fill="#fff" stroke="#2f64b0" stroke-width="1.500"/></svg>
      <svg viewBox="0 0 28 28"><path class="w" d="M1 1h26v26H1z"/><path class="b" d="M1 1h13v26H1z"/><path class="k" d="M14 9h13M14 19h13M21 9v18"/><path d="M1 14h13" stroke="#2f64b0" stroke-width="1.500"/></svg>
      <svg viewBox="0 0 28 28"><circle class="w" cx="14" cy="12" r="9"/><path d="M10 6l5-1 4 4-3 3-5-2zM14 14l4 1-2 4-3-1z" fill="#4b9a59"/><path class="k" d="M21 3c7 8 2 20-9 19l-3-1M14 23v4M5 27h18"/></svg>
      <svg viewBox="0 0 28 28"><path class="g" d="M10 2h16l1 7-6 8-9-3z"/><path class="b" d="M1 3l9 1 3 8 7 3 7-4-2 10-9 5-3-4-6-1-2-6-5-3 3-4z"/></svg>
      <svg viewBox="0 0 28 28"><path d="M17 0l7 28-9-8-12 5z" fill="#3a9bd0"/><path d="M17 0l7 28-8-8z" fill="#2369a5"/></svg>
      <svg viewBox="0 0 28 28"><path class="b" d="M1 20a13 13 0 0 1 26 0h-7a6 6 0 0 0-12 0z"/><path class="w" d="M1 20a13 13 0 0 1 4-9l5 5a6 6 0 0 0-2 4z"/><path class="k" d="M14 20l-5-8"/></svg>
      <svg viewBox="0 0 28 28"><path class="w" d="M1 4h26v20H1z"/><text x="4" y="19" class="n" textLength="20">123</text></svg>
      <svg viewBox="0 0 28 28"><path class="w" d="M1 1h26v26H1z"/><path class="k" d="M5 5v18"/><path class="bl" d="M8 7h13M8 11h9M8 16h14M8 20h8"/></svg>
      <svg viewBox="0 0 28 28"><path class="w" d="M1 3h26v21H1z"/><path d="M5 14l4-8 4 8z" fill="#9cd29f" stroke="#3c8048"/><path d="M15 6h8l-4 9z" fill="#f0a0a0" stroke="#b03030"/><path class="k" d="M4 19h19"/></svg>
      <svg viewBox="0 0 28 28"><path class="g" d="M1 1h26v5H1z"/><path class="k" d="M14 26H1V1h26v9M5 12h6v4H5zM5 20h6v3H5z"/><path class="w" d="M14 14h14l-5 6v7h-4v-7z"/></svg>
      <svg viewBox="0 0 28 28"><path class="w" d="M1 1h26v26H1z"/><path class="g" d="M1 1h26v5H1z"/><path class="k t" d="M1 13h26M1 20h26M10 6v21M18 6v21"/></svg>
      <svg viewBox="0 0 28 28"><path class="w" d="M1 1h26v26H1z"/><path class="b" d="M18 6h9v21H1v-7h17z"/><path class="g" d="M1 1h26v5H1z"/><path class="k t" d="M1 13h26M1 20h26M10 6v21M18 6v21"/></svg>
      <svg viewBox="0 0 28 28"><text x="4" y="22.500" class="R">R</text></svg>
      <svg viewBox="0 0 28 28"><text x="0" y="20.500" class="R" textLength="28">Py</text></svg>
      <svg viewBox="0 0 28 28"><path class="k" d="M1 0v27h27M2 13h11M2 20h6M13 13h8"/><path class="bl" d="M2 6h17"/><circle class="b" cx="23" cy="5" r="4"/><circle class="g" cx="18" cy="13" r="2.500"/><circle class="g" cx="10" cy="20" r="2.500"/></svg>
      <svg viewBox="0 0 28 28"><path class="bl" d="M8 14h8M12 4v20M12 4h4M12 24h4"/><path class="b" d="M1 11h9v6H1zM17 2h10v6H17zM17 11h10v6H17zM17 20h10v6H17z"/></svg>
      <svg viewBox="0 0 28 28"><path d="M1 3h26v15H14l-8 7v-7H1z" fill="#fff" stroke="#2f64b0" stroke-width="1.700"/></svg>
      <svg viewBox="0 0 28 28"><path class="w" d="M4 1h13l7 7v19H4z"/><path class="k" d="M17 1v7h7"/><path class="bl" d="M8 19h11M12 14h7M8 23h5"/><circle class="b" cx="4" cy="12" r="3"/></svg>
      <svg viewBox="0 0 28 28"><path class="w" d="M7 2h14c0 9-2 14-7 14S7 11 7 2zM7 5H2c0 7 3 8 6 8M21 5h5c0 7-3 8-6 8"/><path class="b" d="M11 16h6v6h3v4H8v-4h3z"/></svg>
      <svg viewBox="0 0 28 28"><path class="w" d="M4 1h14l7 7v19H4z"/><path class="k" d="M18 1v7h7"/><path d="M8 17h3v8H8zM13 20h3v5h-3zM18 14h3v11h-3z" fill="#333"/></svg>
      <svg viewBox="0 0 28 28"><path class="w" d="M8 5h19v20H2V14"/><text x="5" y="20" class="n" textLength="20">123</text><path class="z" d="M6 0h7l-4 6h4L3 15l1-7H1z"/></svg>
      <svg viewBox="0 0 28 28"><path class="g" d="M10 1h17v5H10z"/><path class="k" d="M13 26H2V16M27 1v9M8 13h3M5 20h6v3H5z"/><path class="w" d="M14 14h14l-5 6v7h-4v-7z"/><path class="z" d="M6 0h7l-4 6h4L3 15l1-7H1z"/></svg>
      <svg viewBox="0 0 28 28"><path class="b" d="M10 3l7-1-2 7 4 2-5 6 1 9H3V13l6-3z"/><path class="b" d="M19 2h7v9l-4 4-5-3z"/><path class="o" d="M1 1h7v9l-3 4-4-4zM20 19h6v6h-6z"/></svg>
      <svg viewBox="0 0 28 28"><path d="M10 2l4 4 4-4 9 12-9 12-4-4-4 4-9-12zM14 6l-7 8 7 8 7-8zM10 10l8 8M18 10l-8 8" fill="none" stroke="#8b3a9c" stroke-width="1.600"/></svg>
      <svg viewBox="0 0 28 28"><path d="M2 3h15l10 11-8 12H2l9-12zM7 3l10 11-9 12M12 14h5" fill="#dfeafa" stroke="#2f6fd0" stroke-width="1.700"/></svg>
    </div>
    <div class="dots">...</div>
    <div class="wells">
      <p>Значения</p><div class="well">Добавьте сюда поля с дан...</div>
      <strong>Детализация</strong>
      <div class="tg"><span>Несколько отчетов</span><i></i></div>
      <div class="tg"><span>Сохранить все<br>фильтры</span><i></i></div>
      <div class="well w2">Добавьте сюда поля дета...</div>
    </div>
  </aside>

  <aside class="data">
    <header><h2>Данные</h2><svg class="dbl"><use href="#dbl"/></svg></header>
    <div class="dsearch"><svg viewBox="0 0 24 24"><circle cx="9.500" cy="9.500" r="8" fill="none" stroke="#605e5c" stroke-width="1.500"/><path d="M15 15l7 7" stroke="#605e5c" stroke-width="1.600"/></svg>Поиск</div>
    <ul>
      <li><svg class="gt"><use href="#gt"/></svg><svg class="tb"><use href="#tbl"/></svg>Данные из CRM</li>
      <li><svg class="gt"><use href="#gt"/></svg><svg class="tb"><use href="#tbl"/></svg>курс валют</li>
      <li><svg class="gt"><use href="#gt"/></svg><svg class="tb"><use href="#tbl"/></svg>Маркетинговые данн...</li>
      <li><svg class="gt"><use href="#gt"/></svg><svg class="tb"><use href="#tbl"/></svg>Справочник</li>
      <li><svg class="gt"><use href="#gt"/></svg><svg class="tb"><use href="#tbl"/></svg>Таблица 1</li>
      <li><svg class="gt"><use href="#gt"/></svg><svg class="tb"><use href="#tbl"/></svg>Таблица 2</li>
      <li><svg class="gt"><use href="#gt"/></svg><svg class="tb"><use href="#tbl"/></svg>Таблица 3</li>
      <li><svg class="gt"><use href="#gt"/></svg><svg class="tb"><use href="#tbl"/></svg>Таблица 4</li>
      <li><svg class="gt"><use href="#gt"/></svg><svg class="tb"><use href="#tbl"/></svg>Таблица 5</li>
      <li><svg class="gt"><use href="#gt"/></svg><svg class="tb" viewBox="0 0 20 20"><path d="M9 18H4a3 3 0 0 1-3-3V4a3 3 0 0 1 3-3h11a3 3 0 0 1 3 3v2M1 6.500h14M1 12.500h9M6.500 1v17M12.500 1v6" fill="none" stroke="#252423" stroke-width="1.500"/><path d="M11 8h9v12h-9z" fill="#252423"/><path d="M13 10h5M13 13h1.500M16 13h1.500M13 15h1.500M16 15h1.500M13 17h1.500M16 17h1.500" stroke="#fff"/></svg>Client_ID</li>
    </ul>
  </aside>
</main>

<footer class="pages">
  <div class="views">
    <svg viewBox="0 0 193 53"><path d="M19 11h28v17H19zM33 28v5M27 34h12" fill="none" stroke="#3b3a39" stroke-width="2"/><rect x="16" y="42" width="36" height="4" rx="2" fill="#3a7866"/><rect x="91" y="8" width="18" height="29" rx="1.500" fill="none" stroke="#3b3a39" stroke-width="2"/><path d="M99 33h2" stroke="#3b3a39" stroke-width="2"/><path d="M148 20v12l-6-6zM175 20v12l7-6z" fill="#c8c6c4"/></svg>
  </div>
  <span class="t1">Анализ конверсий</span><span class="t2"><svg><use href="#hid"/></svg>Страница 2</span><span class="t2"><svg><use href="#hid"/></svg>Страница 3</span><span class="t3">Анализ продаж</span><span class="add"><svg viewBox="0 0 20 20"><path d="M10 2v16M2 10h16" stroke="#fff" stroke-width="3"/></svg></span>
</footer>
<div class="status"><span>Страница 4 из 4</span><i></i></div>

<div class="toast">
  <div class="th"><svg viewBox="0 0 18 24"><rect x="10" width="8" height="24" rx="1" fill="#d8920f"/><rect x="5" y="6" width="8" height="18" rx="1" fill="#efbb25"/><rect y="12" width="8" height="12" rx="1" fill="#f9de70"/></svg>Microsoft Power BI Desktop<svg class="x" viewBox="0 0 16 16"><path d="M1 1l14 14M15 1L1 15" stroke="#b5b5b5" stroke-width="1.500"/></svg></div>
  <div class="tbd"><svg viewBox="0 0 68 68"><circle cx="34" cy="34" r="34" fill="#0078d7"/><path d="M34 22v33M34 13v5" stroke="#fff" stroke-width="4.500"/></svg><p><b>Обновить Power BI Desktop</b><br>Щелкните, чтобы скачать.</p></div>
</div>
</body>
</html>
```
FILE: styles.css
```css
* { box-sizing: border-box; margin: 0; padding: 0; }
html, body { width: 3840px; height: 2081px; overflow: hidden; }
body { font-family: "Noto Sans", "Open Sans", sans-serif; color: #252423; background: #fff; letter-spacing: -.03em; display: flex; flex-direction: column; position: relative; }
.defs { position: absolute; }
i, em { font-style: normal; }
ul { list-style: none; }
svg { display: block; flex: none; }

.titlebar { height: 51px; flex: none; background: #3b3a37; color: #fff; display: grid; grid-template-columns: 1800px 1fr 340px; align-items: center; font-size: 17px; }
.quick { width: 140px; height: 30px; margin-top: 3px; }
.doc { margin-top: 3px; letter-spacing: -.01em; }
.winctl { display: flex; align-items: center; padding-left: 26px; }
.signin { width: 64px; font-size: 16.500px; margin-top: 3px; letter-spacing: 0; }
.avatar { width: 30px; height: 30px; margin-top: 1px; }
.wc { width: 160px; height: 30px; margin-left: 46px; margin-top: 3px; }

.ribbon { height: 189px; flex: none; background: #fafafa; box-shadow: 0 1px 9px rgba(0,0,0,.25); position: relative; z-index: 3; }
.tabs { height: 54px; display: flex; align-items: flex-start; padding-left: 35px; font-size: 19.500px; letter-spacing: 0; position: relative; }
.tabs span { height: 47px; line-height: 49px; white-space: nowrap; }
.tabs .w1 { width: 105px; } .tabs .w2 { width: 78px; margin-right: 48px; } .tabs .w3 { width: 122px; } .tabs .w4 { width: 208px; } .tabs .w5 { width: 197px; } .tabs .w6 { width: 179px; } .tabs .w7 { width: 90px; }
.tabs .on { font-weight: 600; border-bottom: 5px solid #3a7866; letter-spacing: -.03em; }
.pen { position: absolute; left: 39px; top: 29px; width: 8px; height: 18px; }
.share { position: absolute; right: 9px; top: 6px; width: 176px; height: 36px; border: 0; border-radius: 5px; background: #3a7866; color: #fff; font: 17px "Noto Sans", sans-serif; letter-spacing: -.01em; display: flex; align-items: center; padding-left: 10px; }
.share svg { width: 24px; height: 24px; }
.share span { width: 104px; margin-left: 12px; height: auto; line-height: 24px; text-align: left; }
.share .sc { width: 15px; height: 10px; }
.groups { display: flex; height: 132px; position: relative; }
.grp { border-right: 1.500px solid #d2d0ce; display: flex; flex-direction: column; align-items: center; height: 132px; }
.grp em { font-size: 15px; line-height: 20px; margin-top: auto; margin-bottom: -2px; color: #3b3a39; white-space: nowrap; letter-spacing: -.02em; }
.g1 { width: 382px; } .g2 { width: 683px; } .g3 { width: 258px; } .g4 { width: 452px; } .g5 { width: 168px; } .g6 { width: 177px; } .g7 { width: 148px; } .g8 { width: 88px; }
.btns { display: flex; width: 100%; padding-top: 6px; justify-content: center; height: 108px; }
.btn { display: flex; flex-direction: column; align-items: center; }
.btn > svg { width: 48px; height: 50px; }
.btn p { font-size: 17.600px; line-height: 25px; text-align: center; white-space: nowrap; letter-spacing: -.02em; }
.btn p i { display: inline-block; width: 6px; height: 6px; margin: 0 2px 4px 6px; border: solid currentColor; border-width: 0 1.800px 1.800px 0; transform: rotate(45deg); }
.g1 .btns { justify-content: flex-start; }
.b1 { width: 82px; margin-left: 10px; } .b2 { width: 90px; } .b3 { width: 56px; } .b4 { width: 192px; } .b5 { width: 56px; } .b6 { width: 76px; } .b7 { width: 78px; } .b8 { width: 114px; }
.b9 { width: 148px; } .b10 { width: 84px; } .b11 { width: 172px; } .b12 { width: 88px; } .b13 { width: 168px; } .b14 { width: 72px; } .b15 { width: 70px; }
.off { color: #c8c6c4; }
.minis { font-size: 17px; color: #c8c6c4; margin-top: -6px; letter-spacing: 0; }
.minis p { height: 36px; display: flex; align-items: center; white-space: nowrap; gap: 6px; }
.minis svg { width: 26px; height: 26px; }
.collapse { position: absolute; right: 8px; top: 117px; width: 13px; height: 8px; }

.work { display: flex; height: 1771px; flex: none; }
.rail { width: 61px; flex: none; height: 1824px; background: #f3f2f1; border-right: 1px solid #d8d6d4; position: relative; padding-top: 17px; display: flex; flex-direction: column; align-items: center; gap: 34px; z-index: 1; }
.rail b { position: absolute; left: 0; top: 0; width: 4px; height: 60px; background: #3a7866; }
.rail svg { width: 26px; height: 26px; }
.daxt { font: bold 10px "Noto Sans"; fill: #605e5c; }
.stage { width: 2959px; flex: none; }

.page { position: relative; margin-left: 773px; width: 1414px; height: 1762px;
  background:
    repeating-linear-gradient(180deg, #605e5c 0 3px, transparent 3px 6px) 0 2px / 3px 100% no-repeat,
    repeating-linear-gradient(180deg, #605e5c 0 3px, transparent 3px 6px) 1411px 2px / 3px 100% no-repeat,
    repeating-linear-gradient(90deg, #605e5c 0 3px, transparent 3px 6px) 0 1759px / 100% 3px no-repeat; }
.v { position: absolute; white-space: nowrap; }
.back { position: absolute; left: 3px; top: 1px; width: 70px; height: 27px; }
.banner { position: absolute; left: 3px; top: 51px; width: 1197px; height: 72px; background: #4f2d8a; border-bottom: 1px solid #a898c6; }
h3 { font: 400 13.500px/18px Roboto, "Noto Sans", sans-serif; letter-spacing: -.035em; color: #252423; }
.btitle { left: 7px; top: 68px; font: 14px/18px Roboto, sans-serif; letter-spacing: -.03em; color: #fff; }
.dd { background: #fff; border: 1px solid #b9a9d8; color: #605e5c; display: flex; align-items: center; justify-content: space-between; padding: 0 4px; font-size: 10.500px; }
.dd svg, h5 svg { width: 10px; height: 8px; color: #666; }
.sl1 { left: 125px; top: 52px; width: 187px; color: #fff; }
.sl1 h4 { font: 500 13.400px/20px Roboto, sans-serif; letter-spacing: -.035em; }
.sl1 .dd { margin: 4px 3px 0; height: 17px; font-size: 9px; }
.dates { left: 311px; top: 65px; width: 186px; height: 43px; background: #4a2782; padding: 8px 3px 0 10px; display: flex; gap: 3px; }
.dates div { width: 85px; height: 26px; background: #fff; border: 1px solid #b9a9d8; font-size: 11.500px; line-height: 24px; padding-left: 5px; display: flex; color: #252423; justify-content: space-between; align-items: center; }
.dates svg { width: 15px; height: 24px; padding: 6px 3px 6px 4px; border-left: 1px solid #d0c8e0; }
.sl2 { left: 512px; top: 56px; width: 144px; height: 44px; background: #4a2782; padding: 2px 6px 0; }
.sl3 { left: 667px; top: 60px; width: 248px; height: 47px; background: #4a2782; padding: 3px 7px 0; }
h5 { font-size: 10.500px; line-height: 16px; font-weight: 600; color: #fff; display: flex; justify-content: space-between; padding: 0 2px; align-items: center; }
h5 svg { color: #2c1658; }
.sl2 .dd { height: 20px; margin-top: 1px; font-size: 10px; } .sl3 .dd { height: 20px; margin-top: 2px; }
.info { left: 1168px; top: 74px; width: 24px; height: 24px; }
.vhead { left: 756px; top: 108px; display: flex; gap: 6px; }
.vhead svg { width: 35px; height: 22px; background: #fff; fill: #605e5c; }

.kpi { display: flex; flex-direction: column; align-items: center; text-align: center; width: 200px; }
.kpi b { font: 400 38px/38px Roboto, sans-serif; letter-spacing: -1px; word-spacing: 3px; color: #252423; -webkit-text-stroke: .3px #252423; }
.kpi span { font: 12px/16px Roboto, "Noto Sans", sans-serif; letter-spacing: -.035em; color: #5f5d5b; margin-top: 5px; }
.k0 { left: 1209px; top: 51px; }
.k0 span { font-size: 14px; line-height: 16px; margin: 0 0 7px; color: #252423; }
.k1 { left: 172px; top: 669px; } .k2 { left: 345px; top: 671px; } .k3 { left: 512px; top: 675px; } .k4 { left: 940px; top: 676px; }

.h-city { left: 173px; top: 127px; }
.bars { left: 20px; top: 156px; font-size: 9.500px; color: #777; letter-spacing: -.02em; }
.bars div { display: flex; align-items: center; height: 15.150px; }
.bars span { width: 97px; text-align: right; margin-right: 7px; }
.bars i { height: 12px; background: #e8b535; border: 1px solid #f0cf7c; margin-right: 6px; }
.vscroll { left: 451px; top: 152px; width: 5px; height: 160px; background: linear-gradient(#bdbbb9 0 3px, #f3f2f1 3px); }
.zoom1 { left: 117px; top: 312px; width: 342px; height: 14px; }
.ax1 { left: 226px; top: 325px; font: 12px/18px Roboto, sans-serif; letter-spacing: -.045em; }
.h-reg { left: 22px; top: 341px; font-size: 13.500px; letter-spacing: -.02em; color: #3b3a39; }
.donut { left: 486px; top: 135px; width: 388px; height: 190px; border: 1px solid #e1dfdd; }
.donut h3 { position: absolute; left: 3px; top: -1px; }
.donut > svg { position: absolute; left: -1px; top: -1px; width: 388px; height: 190px; }
.ring { transform: rotate(-90deg); transform-origin: 1488.400px 477px; }
.lbl { font-size: 9.500px; fill: #777; letter-spacing: 0; }
.axis { font: 12px Roboto, sans-serif; fill: #252423; letter-spacing: 0; }
.legend { position: absolute; left: 332px; top: 16px; font-size: 10px; color: #605e5c; }
.legend li { height: 17.850px; line-height: 17.850px; display: flex; align-items: center; gap: 1px; }
.legend li::before { content: ""; width: 8px; height: 8px; border-radius: 50%; background: var(--c); }
.legend .lt { font-weight: 600; height: 14px; margin-bottom: -1px; } .legend .lt::before { display: none; }
.c1 { --c: #000; } .c2 { --c: #e8b535; } .c3 { --c: #4a2a88; } .c4 { --c: #d2d2d4; } .c5 { --c: #5c0f72; } .c6 { --c: #d04fa8; } .c7 { --c: #7050c0; } .c8 { --c: #d4b02e; }
.h-line { left: 950px; top: 127px; }
.line { left: 946px; top: 148px; width: 400px; height: 182px; }

.matrix { left: 41px; top: 765px; width: 176px; font-size: 9.800px; border: 1px solid #c8c6c4; }
.matrix div { display: grid; grid-template-columns: 63px 1fr; height: 13.360px; line-height: 13px; }
.matrix span { border-bottom: 1px solid #e1dfdd; text-align: right; padding-right: 4px; position: relative; }
.matrix span:first-child { background: #252423; color: #fff; text-align: left; padding-left: 22px; border-color: #8a8886; border-right: 1px solid #4a6fa5; }
.matrix .mh { height: 19px; background: #252423; color: #fff; line-height: 15px; }
.matrix .mh span:first-child { padding-left: 3px; }
.matrix .mh span { border-color: #5878a8; white-space: nowrap; padding-right: 3px; }
.matrix .mh span + span::after { content: "▼"; position: absolute; left: 4px; top: 8px; font-size: 6px; }
.matrix .bd { font-weight: 700; } .matrix .bd span:first-child { padding-left: 16px; }
.matrix svg { position: absolute; left: 3px; top: 2px; width: 7px; height: 8px; }
.matrix .tot { background: #252423; color: #fff; }

.h-fun { left: 22px; top: 1109px; letter-spacing: -.048em; }
.funnel { left: 22px; top: 1129px; font-size: 10px; color: #605e5c; letter-spacing: -.04em; }
.funnel div { display: flex; align-items: center; height: 21.250px; }
.funnel span { width: 161px; }
.funnel p { width: 454px; display: flex; justify-content: center; }
.funnel i { height: 20px; line-height: 19px; background: #e8b535; border: 1px solid #f0cf7c; color: #fff; text-align: center; position: relative; }
.funnel u { position: absolute; left: 100%; margin-left: 7px; text-decoration: none; color: #605e5c; }
.h-tree { left: 22px; top: 1274px; }
.tree { left: 22px; top: 1294px; width: 450px; font-size: 9.800px; color: #fff; }
.tree div { height: 175px; background: #e8b535; border: 1px solid #f0cf7c; display: flex; flex-direction: column; justify-content: space-between; padding: 2px 3px 1px; line-height: 13px; margin-bottom: 1px; }
.tree div span + span { font-size: 8px; line-height: 10px; }
.tree .t2 { height: 169px; background: #4a2884; border-color: #8b78b4; }

.grid { left: 671px; top: 766px; width: 676px; font-size: 9.200px; }
.r { display: grid; grid-template-columns: 169px 73.500px 85.500px 112px 158px 78px; height: 14.770px; line-height: 13.500px; border-bottom: 1px solid #4a4846; }
.r span { text-align: right; padding-right: 4px; border-right: 1px solid #6a6866; position: relative; }
.r span:first-child { text-align: left; padding-left: 16px; }
.r span:last-child { border-right: 0; }
.r span:first-child svg { position: absolute; left: 4px; top: 3px; width: 7px; height: 8px; }
.r span:last-child svg { position: absolute; left: 3px; top: 0; width: 13px; height: 14px; }
.r i { position: absolute; left: 4px; top: 0; bottom: 0; background: #b5a9d0; z-index: -1; border-left: 1px solid #3b3a39; }
.rows .r { position: relative; z-index: 0; }
.rows .r:nth-child(even) { background: #f6e1a2; }
.rows { height: 461px; overflow: hidden; border-bottom: 1px solid #f6e1a2; }
.gh { height: 19.500px; line-height: 16px; }
.gh span { padding-right: 4px; } .gh span:first-child { padding-left: 3px; }
.gh span:nth-child(3)::after { content: "▼"; position: absolute; left: 5px; top: 7px; font-size: 6px; }
.gtot.r { font-weight: 600; border: 0; line-height: 14px; }
.gscroll { left: 1380px; top: 766px; width: 6px; height: 192px; border-radius: 3px; background: #b3b1af; }

aside header { display: flex; align-items: center; height: 30px; margin-top: 15px; }
h2 { font-size: 22px; line-height: 30px; font-weight: 600; letter-spacing: 0; }
.dbl { width: 19px; height: 20px; }
.filters { width: 279px; flex: none; border-left: 1px solid #a19f9d; background: #fff; font-size: 17.500px; }
.filters header { padding-left: 17px; }
.filters header > svg:first-child { width: 26px; height: 24px; margin-right: 11px; }
.filters h2 { width: 143px; letter-spacing: -.01em; }
.filters .eye { width: 21px; height: 18px; margin-right: 25px; }
.fsearch { margin: 22px 0 0 12px; width: 247px; height: 46px; border: 1px solid #979593; border-radius: 2px; display: flex; align-items: center; padding-left: 15px; gap: 19px; font-size: 18.500px; }
.fsearch svg { width: 24px; height: 24px; }
.filters hr { border: 0; border-top: 1.500px solid #a19f9d; margin-top: 6px; }
.filters p { display: flex; justify-content: space-between; width: 248px; margin: 25px 0 12px 12px; line-height: 25px; white-space: nowrap; color: #3b3a39; letter-spacing: -.025em; }
.filters p span { letter-spacing: .1em; }
.filters .p2 { margin-top: 40px; }
.drop { width: 253px; height: 68px; margin-left: 12px; border: 1px solid #c8c6c4; border-radius: 2px; padding-left: 21px; line-height: 66px; letter-spacing: 0; }

.viz { width: 271px; flex: none; border-left: 1px solid #d8d6d4; background: #f3f2f1; font-size: 18px; height: 1824px; }
.viz header { padding-left: 12px; }
.viz h2 { width: 227px; }
h6 { font-size: 17px; font-weight: 600; line-height: 26px; margin: 11px 0 0 11px; white-space: nowrap; letter-spacing: -.015em; }
.modes { display: flex; margin: 4px 0 0 12px; gap: 54px; align-items: center; }
.modes svg { width: 40px; height: 44px; }
.modes .sel { width: 48px; height: 48px; background: #d2d0ce; border-radius: 4px; }
.caret { width: 270px; height: 13px; margin-top: 7px; }
.icons { display: grid; grid-template-columns: repeat(6, 28px); gap: 14px; margin: 16px 0 0 16px; }
.icons svg { width: 28px; height: 28px; overflow: visible; }
.k { fill: none; stroke: #3b3a39; stroke-width: 1.900; } .k.t { stroke-width: 1.400; }
.w { fill: #fff; stroke: #3b3a39; stroke-width: 1.600; }
.b { fill: #92bdec; stroke: #2f64b0; stroke-width: 1.500; }
.g { fill: #c8c6c4; stroke: #797775; stroke-width: 1.500; }
.o { fill: #f2a65a; stroke: #c46a1c; stroke-width: 1.300; }
.z { fill: #f6d98b; stroke: #c46a1c; stroke-width: 1.400; }
.bl { fill: none; stroke: #3070c0; stroke-width: 1.900; }
.n { font: 13.500px "Noto Sans"; fill: #3d83c9; }
.R { font: 700 23px "Noto Sans"; fill: #3d83c9; }
.dots { margin: 8px 0 0 18px; font-size: 22px; line-height: 20px; letter-spacing: .12em; }
.wells { margin-top: 27px; border-top: 1.500px solid #d8d6d4; padding-left: 17px; }
.wells > p { margin-top: 12px; line-height: 26px; }
.well { margin: 7px 0 0 -10px; width: 255px; height: 43px; border: 1.500px dashed #c8c6c4; background: #fff; padding-left: 14px; line-height: 39px; font-size: 17.500px; white-space: nowrap; letter-spacing: -.01em; }
.w2.well { height: 39px; line-height: 37px; margin-top: 12px; padding-left: 11px; letter-spacing: -.02em; }
.wells strong { display: block; font-weight: 600; margin-top: 14px; line-height: 26px; color: #484644; letter-spacing: -.035em; }
.tg { display: flex; line-height: 25px; width: 219px; justify-content: space-between; margin-top: 12px; font-size: 17.500px; letter-spacing: -.02em; }
.tg + .tg { margin-top: 15px; }
.tg i { width: 48px; height: 24px; border: 1px solid #7a7876; border-radius: 12px; background: radial-gradient(circle at 12px 11px, #605e5c 0 6px, #fff 6.500px); }

.data { width: 270px; flex: none; border-left: 1px solid #d8d6d4; background: #f3f2f1; font-size: 17.500px; height: 1824px; letter-spacing: -.02em; }
.data header { padding-left: 12px; }
.data h2 { width: 227px; }
.dsearch { width: 256px; height: 36px; margin: 23px 0 0 7px; background: #fff; border: 1px solid #d2d0ce; border-bottom: 1.500px solid #605e5c; border-radius: 4px; display: flex; align-items: center; padding-left: 17px; gap: 9px; color: #605e5c; font-size: 19px; }
.dsearch svg { width: 23px; height: 23px; }
.data ul { margin-top: 14px; }
.data li { height: 36px; display: flex; align-items: center; padding-left: 24px; white-space: nowrap; color: #3b3a39; }
.gt { width: 9px; height: 18px; margin-right: 10px; }
.tb { width: 20px; height: 20px; margin-right: 7px; }

.pages { height: 54px; flex: none; display: flex; margin-left: 61px; background: #f3f2f1; border-bottom: 1.500px solid #d8d6d4; font-size: 17.500px; letter-spacing: -.01em; position: relative; z-index: 2; }
.views { width: 192px; border-right: 1px solid #bdbbb9; }
.views svg { width: 193px; height: 53px; }
.pages > span { background: #fff; border-right: 1px solid #c8c6c4; display: flex; align-items: center; justify-content: center; gap: 5px; white-space: nowrap; padding-top: 2px; }
.pages > span svg { width: 20px; height: 22px; }
.pages .t1 { width: 213px; } .pages .t2 { width: 155px; } .pages .t3 { width: 194px; font-weight: 600; border: 0; border-bottom: 6px solid #3a7866; padding-top: 7px; letter-spacing: -.02em; }
.pages .add { width: 58px; background: #3a7866; border: 0; padding: 0 0 4px; }
.status { height: 16px; background: #f3f2f1; position: relative; z-index: 2; font-size: 15px; line-height: 20px; padding: 8px 0 0 7px; overflow: hidden; color: #3b3a39; }
.status i { position: absolute; left: 3156px; top: 9px; width: 6px; height: 8px; background: #605e5c; }

.toast { position: absolute; left: 3270px; top: 1897px; width: 546px; height: 183px; background: #393939; color: #fff; z-index: 5; padding-left: 27px; }
.th { display: flex; align-items: center; font-size: 18px; margin-top: 27px; height: 26px; gap: 15px; }
.th svg { width: 18px; height: 24px; }
.th .x { width: 15px; height: 15px; margin-left: auto; margin-right: 35px; margin-top: -4px; }
.tbd { display: flex; gap: 36px; padding-left: 8px; margin-top: 24px; font-size: 22px; line-height: 30px; color: #a6a6a6; }
.tbd svg { width: 68px; height: 68px; margin-top: 3px; }
.tbd p { margin-top: -1px; white-space: nowrap; }
.tbd b { font-weight: 600; color: #fff; letter-spacing: -.027em; }
```
